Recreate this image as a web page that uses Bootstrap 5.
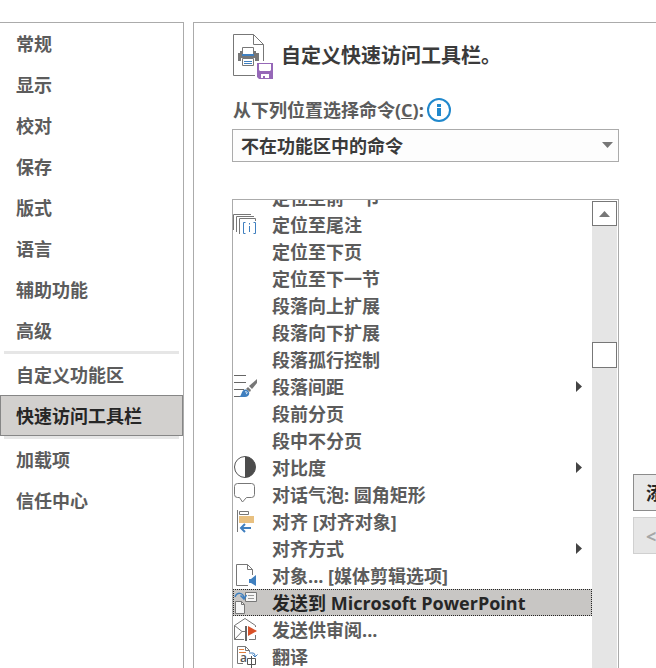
<!DOCTYPE html>
<html lang="zh-CN">
<head>
<meta charset="utf-8">
<meta name="viewport" content="width=device-width, initial-scale=1">
<title>自定义快速访问工具栏</title>
<link href="https://cdn.jsdelivr.net/npm/bootstrap@5.3.0/dist/css/bootstrap.min.css" rel="stylesheet">
<style>
  body { font-family: "Open Sans", "Noto Sans CJK SC", sans-serif; font-size: 18px; font-weight: 700; line-height: 27px; color: #5c5c5c; background: #fff; }
  .dialog-body { gap: 9px; padding-top: 22px; }
  .side { flex: 0 0 184px; border: 1px solid #ababab; border-width: 1px 1px 0 0; }
  .side .list-group { --bs-list-group-color: #5c5c5c; --bs-list-group-action-color: #5c5c5c; --bs-list-group-border-radius: 0; }
  .side .list-group .list-group-item { height: 41px; padding: 1px 15px 0; border: 1px solid transparent; line-height: 37px; font-weight: 700; }
  .side .list-group .list-group-item.active { color: #262626; background: #d2d0ce; border-color: #868686; margin: 0; }
  .side-rule { height: 3px; margin: 0 4px; background: #e6e6e6; border: 0; opacity: 1; }
  .pane { border: 1px solid #ababab; border-width: 1px 0 0 1px; padding: 11px 0 0 38px; min-width: 0; }
  .pane-title { font-size: 20px; line-height: 30px; font-weight: 700; color: #3b3b3b; padding-top: 7px; }
  .title-row { gap: 7px; height: 46px; padding-left: 1px; }
  .label-row { height: 28px; margin-top: 17px; gap: 2px; padding-left: 1px; }
  .source-col { margin-right: 37px; }
  .source-select { height: 33px; padding: 1px 8px 0; border: 1px solid #ababab; border-radius: 0; background-color: #fdfdfd; color: #3b3b3b; font-size: 18px; font-weight: 700; line-height: 27px; appearance: none; }
  .select-arrow { position: absolute; right: 6px; top: 13px; pointer-events: none; }
  .list-row { margin-top: 37px; gap: 14px; min-height: 0; }
  .cmd-box { border: 1px solid #ababab; border-bottom: 0; min-width: 0; }
  .cmd-list { margin: -16px 0 0; }
  .cmd-list li { height: 27px; border: 1px solid transparent; line-height: 26px; white-space: nowrap; }
  .cmd-list li.picked { background: #c8c6c4; border: 1px dotted #262626; color: #262626; }
  .cmd-icon { flex: 0 0 25px; height: 25px; margin: 0 14px 0 -1px; }
  .fly { margin: 0 9px 0 auto; align-self: center; }
  .scroll-track { flex: 0 0 25px; background: #e5e5e5; margin: 1px 1px 0 0; }
  .scroll-btn, .scroll-thumb { width: 25px; height: 25px; background: #fff; border: 1px solid #777; border-radius: 0; padding: 0; }
  .scroll-thumb { height: 26px; margin-top: 116px; }
  .move-col { flex: 0 0 23px; gap: 6px; padding-top: 275px; }
  .move-col .btn { width: 138px; height: 37px; border-radius: 0; border: 1px solid #8c8c8c; background: #e8e8e8; color: #262626; font-size: 18px; font-weight: 700; line-height: 27px; padding: 1px 12px 0; text-align: left; }
  .move-col .btn:disabled { border-color: #d0d0d0; background: #e6e6e6; color: #a6a6a6; opacity: 1; }
</style>
<script src="https://cdn.jsdelivr.net/npm/bootstrap@5.3.0/dist/js/bootstrap.bundle.min.js"></script>
</head>
<body class="overflow-hidden">
<div class="dialog-body d-flex vh-100">
  <nav class="side" aria-label="选项类别">
    <div class="list-group">
      <button type="button" class="list-group-item list-group-item-action">常规</button>
      <button type="button" class="list-group-item list-group-item-action">显示</button>
      <button type="button" class="list-group-item list-group-item-action">校对</button>
      <button type="button" class="list-group-item list-group-item-action">保存</button>
      <button type="button" class="list-group-item list-group-item-action">版式</button>
      <button type="button" class="list-group-item list-group-item-action">语言</button>
      <button type="button" class="list-group-item list-group-item-action">辅助功能</button>
      <button type="button" class="list-group-item list-group-item-action">高级</button>
    </div>
    <hr class="side-rule">
    <div class="list-group">
      <button type="button" class="list-group-item list-group-item-action">自定义功能区</button>
      <button type="button" class="list-group-item list-group-item-action active" aria-current="true">快速访问工具栏</button>
    </div>
    <hr class="side-rule">
    <div class="list-group">
      <button type="button" class="list-group-item list-group-item-action">加载项</button>
      <button type="button" class="list-group-item list-group-item-action">信任中心</button>
    </div>
  </nav>

  <main class="pane flex-fill d-flex flex-column">
    <div class="title-row d-flex align-items-start">
      <svg width="41" height="46" viewBox="0 0 41 46" fill="none" aria-hidden="true">
        <path d="M30.500 27V10.500L20.500.5H.5V41.500H22M20.500.5V10.500H30.500" stroke="#777"/>
        <path d="M7 17H23V19H26V27H22V24H8V27H5V19H7Z" fill="#777"/>
        <path d="M9.500 20V13.500H20.500V20" fill="#fff" stroke="#777"/>
        <path d="M9 20H21V22H9Z" fill="#3f7fbf"/>
        <path d="M9.500 24.500H20.500V31.500H9.500Z" fill="#fff" stroke="#777"/>
        <path d="M11 27.500H19M11 29.500H19" stroke="#3f7fbf"/>
        <path d="M24 29H40V45H26L24 43Z" fill="#9668b8"/>
        <path d="M26 30H38V36L37 37H27L26 36ZM28 40H36V44H32V42H30V44H28Z" fill="#fff"/>
      </svg>
      <h1 class="pane-title mb-0">自定义快速访问工具栏。</h1>
    </div>

    <div class="source-col">
      <div class="label-row d-flex align-items-start">
        <label for="source">从下列位置选择命令(<u>C</u>):</label>
        <svg width="26" height="26" viewBox="0 0 26 26" fill="none" role="img" aria-label="信息">
          <circle cx="13" cy="13" r="11" stroke="#2088cc" stroke-width="2"/>
          <path d="M11 7H15V10H11ZM11 11H15V19H11Z" fill="#2088cc"/>
        </svg>
      </div>
      <div class="position-relative mt-1">
        <select id="source" class="source-select w-100 d-block"><option>不在功能区中的命令</option></select>
        <svg class="select-arrow" width="11" height="6" viewBox="0 0 11 6" aria-hidden="true"><path d="M0 0H11L5.500 6Z" fill="#777"/></svg>
      </div>
    </div>

    <div class="list-row d-flex flex-fill">
      <div class="cmd-box d-flex flex-fill overflow-hidden">
        <ul class="cmd-list list-unstyled flex-fill" role="listbox" aria-label="命令">
          <li class="d-flex" role="option"><span class="cmd-icon"></span>定位至前一节</li>
          <li class="d-flex" role="option">
            <svg class="cmd-icon" viewBox="0 0 25 25" fill="none"><path d="M.5 18V2.500H18M3.500 20V4.500H21M6.500 22V6.500H22.500V9" stroke="#777"/><path d="M12.500 10.500H10.500V21.500H12.500M20.500 10.500H22.500V21.500H20.500M16.500 14V20M16.500 11V12.500" stroke="#3f7fbf"/></svg>定位至尾注</li>
          <li class="d-flex" role="option"><span class="cmd-icon"></span>定位至下页</li>
          <li class="d-flex" role="option"><span class="cmd-icon"></span>定位至下一节</li>
          <li class="d-flex" role="option"><span class="cmd-icon"></span>段落向上扩展</li>
          <li class="d-flex" role="option"><span class="cmd-icon"></span>段落向下扩展</li>
          <li class="d-flex" role="option"><span class="cmd-icon"></span>段落孤行控制</li>
          <li class="d-flex" role="option">
            <svg class="cmd-icon" viewBox="0 0 25 25" fill="none"><path d="M1 1.500H13M1 8.500H13M1 15.500H11M1 22.500H7" stroke="#666"/><path d="M24 5V9L19 15L16 12Z" fill="#777"/><path d="M15 13L18 16L17 18L13 15Z" fill="#777"/><path d="M6 23C9 22 8 15 13 15.500C18 17 17 23 12 23Z" fill="#3f7fbf"/><path d="M12 18C14 17 15 19 13 20" stroke="#fff"/></svg>段落间距
            <svg class="fly" width="6" height="11" viewBox="0 0 6 11"><path d="M0 0L6 5.500L0 11Z" fill="#444"/></svg></li>
          <li class="d-flex" role="option"><span class="cmd-icon"></span>段前分页</li>
          <li class="d-flex" role="option"><span class="cmd-icon"></span>段中不分页</li>
          <li class="d-flex" role="option">
            <svg class="cmd-icon" viewBox="0 0 25 25" fill="none"><circle cx="12" cy="12" r="10.500" fill="#fff" stroke="#555"/><path d="M12 1.500A10.500 10.500 0 0 1 12 22.500Z" fill="#4c4c4c"/></svg>对比度
            <svg class="fly" width="6" height="11" viewBox="0 0 6 11"><path d="M0 0L6 5.500L0 11Z" fill="#444"/></svg></li>
          <li class="d-flex" role="option">
            <svg class="cmd-icon" viewBox="0 0 25 25" fill="none"><path d="M4.500 1.500H18.500Q21.500 1.500 21.500 4.500V12.500Q21.500 15.500 18.500 15.500H13.500L9.500 20L6.500 15.500H4.500Q1.500 15.500 1.500 12.500V4.500Q1.500 1.500 4.500 1.500Z" stroke="#777"/></svg>对话气泡: 圆角矩形</li>
          <li class="d-flex" role="option">
            <svg class="cmd-icon" viewBox="0 0 25 25" fill="none"><path d="M4.500 1V23M6.500 2.500H15.500V5.500H6.500Z" stroke="#777"/><path d="M6 7H21V14H6Z" fill="#e8c080"/><path d="M18 19H9M12 15L8 19L12 23" stroke="#3f7fbf" stroke-width="2"/></svg>对齐 [对齐对象]</li>
          <li class="d-flex" role="option"><span class="cmd-icon"></span>对齐方式
            <svg class="fly" width="6" height="11" viewBox="0 0 6 11"><path d="M0 0L6 5.500L0 11Z" fill="#444"/></svg></li>
          <li class="d-flex" role="option">
            <svg class="cmd-icon" viewBox="0 0 25 25" fill="none"><path d="M15 22.500H3.500V1.500H14.500L19.500 6.500V12M14.500 1.500V6.500H19.500" stroke="#777"/><path d="M16 16H18L23 12V23L18 20H16Z" fill="#3f7fbf"/></svg>对象... [媒体剪辑选项]</li>
          <li class="d-flex picked" role="option" aria-selected="true">
            <svg class="cmd-icon" viewBox="0 0 25 25" fill="none"><path d="M12.500 2.500H23.500V11.500H12.500Z" fill="#f5f5f5" stroke="#777"/><path d="M15 5.500H21M15 8.500H21" stroke="#999"/><path d="M2.500 11.500H8.500L11.500 14.500V23.500H2.500Z" fill="#f5f5f5" stroke="#777"/><path d="M8.500 11.500V14.500H11.500" stroke="#777"/><path d="M2 7C4 2 10 2 11 8M7.500 5.500L11 9L13.500 5" stroke="#3f7fbf" stroke-width="1.500"/></svg>发送到 Microsoft PowerPoint</li>
          <li class="d-flex" role="option">
            <svg class="cmd-icon" viewBox="0 0 25 25" fill="none"><path d="M11 22.500H1.500V8.500L12 1.500L22.500 8.500V10M22.500 18V22.500H16M1.500 8.500L9 14.500M1.500 22.500L9 14.500H12" stroke="#777"/><path d="M13 9V24" stroke="#666" stroke-width="2"/><path d="M15 9L24 14L15 19Z" fill="#d85028"/></svg>发送供审阅...</li>
          <li class="d-flex" role="option">
            <svg class="cmd-icon" viewBox="0 0 25 25" fill="none"><path d="M10 19.500H4.500V2.500H12.500L16.500 6.500V8M12.500 2.500V6.500H16.500" stroke="#777"/><path d="M6 5.500H11M6 8.500H13" stroke="#e08040"/><text x="7" y="18" font-size="12" font-weight="600" fill="#555">a</text><path d="M14.500 14.500H22.500V20.500H14.500ZM18.500 12V25" stroke="#555"/><path d="M16 9H20Q22 9 22 12M19.500 10.500L22 13L24.500 10.500" stroke="#3f7fbf"/></svg>翻译</li>
        </ul>
        <div class="scroll-track">
          <button type="button" class="scroll-btn d-flex align-items-center justify-content-center" aria-label="向上滚动"><svg width="11" height="6" viewBox="0 0 11 6"><path d="M0 6H11L5.500 0Z" fill="#777"/></svg></button>
          <div class="scroll-thumb"></div>
        </div>
      </div>
      <div class="move-col d-flex flex-column overflow-hidden">
        <button type="button" class="btn flex-shrink-0">添加(<u>A</u>) &gt;&gt;</button>
        <button type="button" class="btn flex-shrink-0" disabled>&lt;&lt; 删除(<u>R</u>)</button>
      </div>
    </div>
  </main>
</div>
</body>
</html>
